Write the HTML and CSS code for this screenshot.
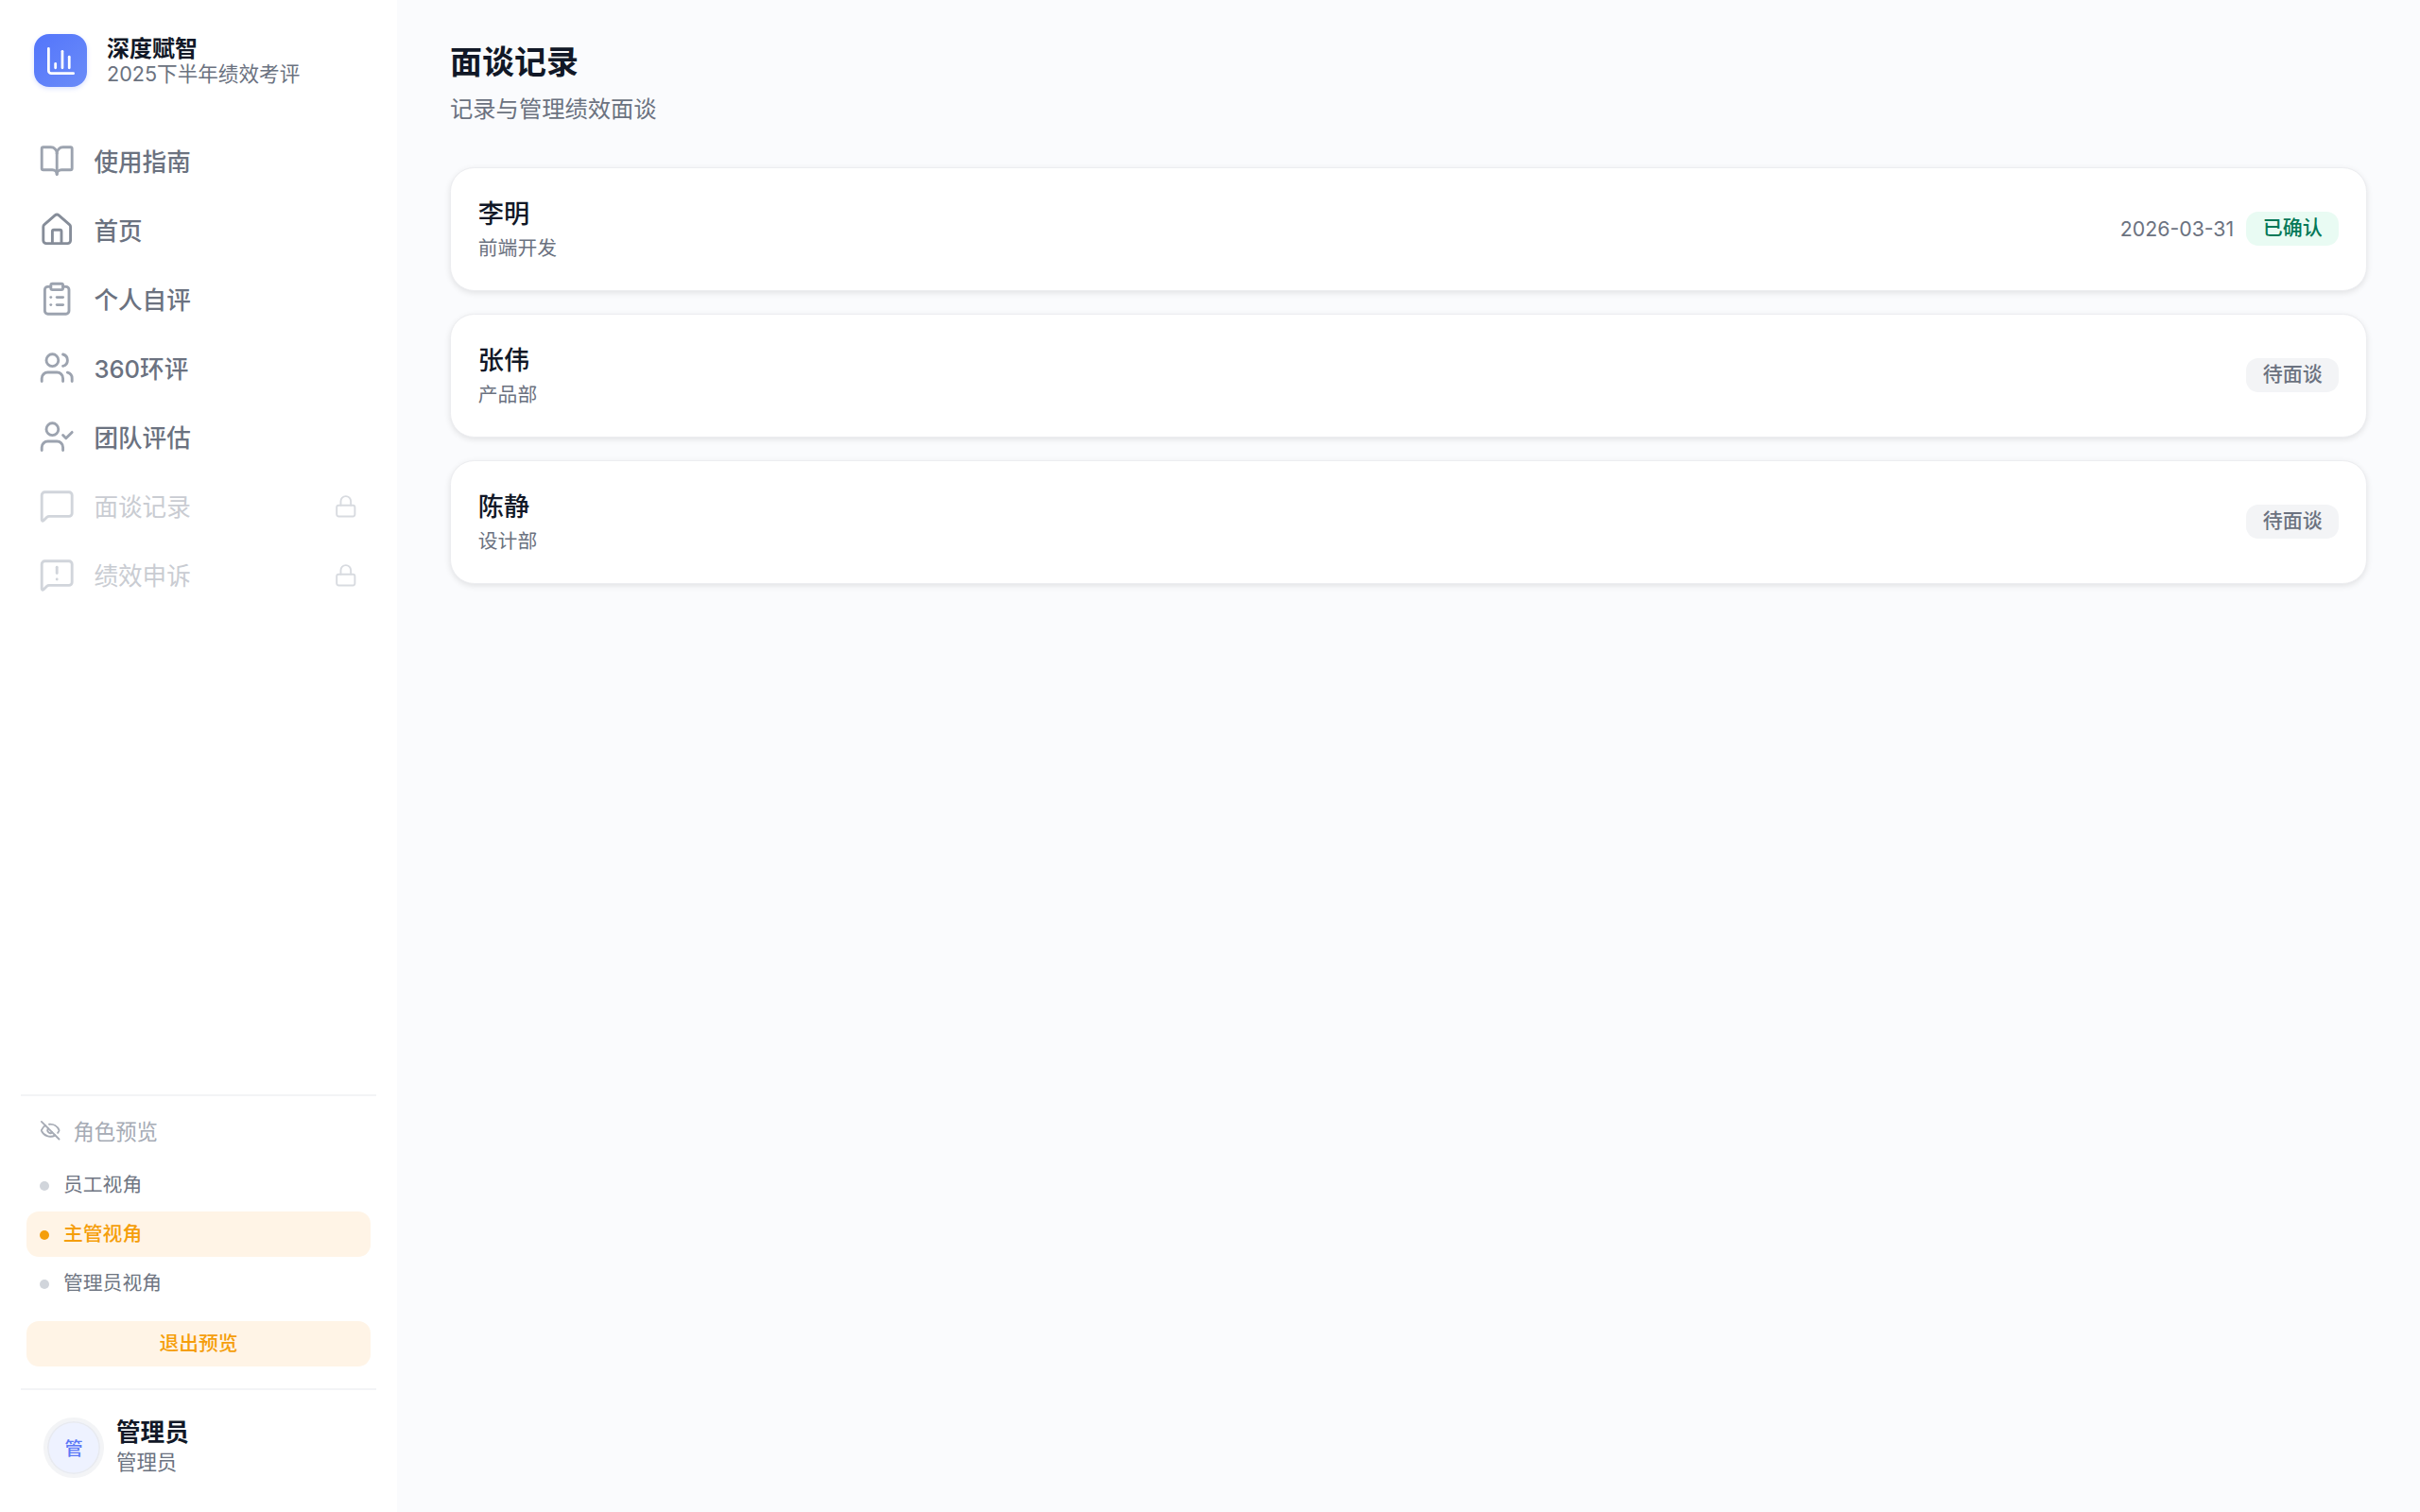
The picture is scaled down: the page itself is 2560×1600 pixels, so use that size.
FILE: index.html
```html
<!DOCTYPE html>
<html lang="zh-CN">
<head>
<meta charset="utf-8">
<title>面谈记录</title>
<link rel="stylesheet" href="styles.css">
</head>
<body>
<div class="app">
  <aside class="sidebar">
    <div class="brand">
      <div class="logo">
        <svg viewBox="0 0 24 24" class="logo-icon"><path d="M3 3v16a2 2 0 0 0 2 2h16"/><path d="M18 17V9"/><path d="M13 17V5"/><path d="M8 17v-3"/></svg>
      </div>
      <div class="brand-text">
        <div class="brand-name">深度赋智</div>
        <div class="brand-sub">2025下半年绩效考评</div>
      </div>
    </div>
    <nav class="nav">
      <a class="nav-item"><svg class="nav-icon" viewBox="0 0 24 24"><path d="M12 7v14"/><path d="M3 18a1 1 0 0 1-1-1V4a1 1 0 0 1 1-1h5a4 4 0 0 1 4 4 4 4 0 0 1 4-4h5a1 1 0 0 1 1 1v13a1 1 0 0 1-1 1h-6a3 3 0 0 0-3 3 3 3 0 0 0-3-3z"/></svg><span class="nav-label">使用指南</span></a>
      <a class="nav-item"><svg class="nav-icon" viewBox="0 0 24 24"><path d="M15 21v-8a1 1 0 0 0-1-1h-4a1 1 0 0 0-1 1v8"/><path d="M3 10a2 2 0 0 1 .709-1.528l7-5.999a2 2 0 0 1 2.582 0l7 5.999A2 2 0 0 1 21 10v9a2 2 0 0 1-2 2H5a2 2 0 0 1-2-2z"/></svg><span class="nav-label">首页</span></a>
      <a class="nav-item"><svg class="nav-icon" viewBox="0 0 24 24"><rect width="8" height="4" x="8" y="2" rx="1" ry="1"/><path d="M16 4h2a2 2 0 0 1 2 2v14a2 2 0 0 1-2 2H6a2 2 0 0 1-2-2V6a2 2 0 0 1 2-2h2"/><path d="M12 11h4"/><path d="M12 16h4"/><path d="M8 11h.01"/><path d="M8 16h.01"/></svg><span class="nav-label">个人自评</span></a>
      <a class="nav-item"><svg class="nav-icon" viewBox="0 0 24 24"><path d="M16 21v-2a4 4 0 0 0-4-4H6a4 4 0 0 0-4 4v2"/><path d="M16 3.128a4 4 0 0 1 0 7.744"/><path d="M22 21v-2a4 4 0 0 0-3-3.87"/><circle cx="9" cy="7" r="4"/></svg><span class="nav-label">360环评</span></a>
      <a class="nav-item"><svg class="nav-icon" viewBox="0 0 24 24"><path d="M16 21v-2a4 4 0 0 0-4-4H6a4 4 0 0 0-4 4v2"/><circle cx="9" cy="7" r="4"/><polyline points="16 11 18 13 22 9"/></svg><span class="nav-label">团队评估</span></a>
      <a class="nav-item locked"><svg class="nav-icon" viewBox="0 0 24 24"><path d="M22 17a2 2 0 0 1-2 2H6.828a2 2 0 0 0-1.414.586l-2.202 2.202A.71.71 0 0 1 2 21.286V5a2 2 0 0 1 2-2h16a2 2 0 0 1 2 2z"/></svg><span class="nav-label">面谈记录</span><svg class="lock-icon" viewBox="0 0 24 24"><rect width="18" height="11" x="3" y="11" rx="2" ry="2"/><path d="M7 11V7a5 5 0 0 1 10 0v4"/></svg></a>
      <a class="nav-item locked"><svg class="nav-icon" viewBox="0 0 24 24"><path d="M22 17a2 2 0 0 1-2 2H6.828a2 2 0 0 0-1.414.586l-2.202 2.202A.71.71 0 0 1 2 21.286V5a2 2 0 0 1 2-2h16a2 2 0 0 1 2 2z"/><path d="M12 7v4"/><path d="M12 15h.01"/></svg><span class="nav-label">绩效申诉</span><svg class="lock-icon" viewBox="0 0 24 24"><rect width="18" height="11" x="3" y="11" rx="2" ry="2"/><path d="M7 11V7a5 5 0 0 1 10 0v4"/></svg></a>
    </nav>
    <section class="preview">
      <div class="preview-label"><svg class="eye-icon" viewBox="0 0 24 24"><path d="M10.733 5.076a10.744 10.744 0 0 1 11.205 6.575 1 1 0 0 1 0 .696 10.747 10.747 0 0 1-1.444 2.49"/><path d="M14.084 14.158a3 3 0 0 1-4.242-4.242"/><path d="M17.479 17.499a10.75 10.75 0 0 1-15.417-5.151 1 1 0 0 1 0-.696 10.75 10.75 0 0 1 4.446-5.143"/><path d="m2 2 20 20"/></svg><span>角色预览</span></div>
      <div class="role"><i class="dot"></i><span class="role-label">员工视角</span></div>
      <div class="role active"><i class="dot"></i><span class="role-label">主管视角</span></div>
      <div class="role"><i class="dot"></i><span class="role-label">管理员视角</span></div>
      <button class="exit">退出预览</button>
    </section>
    <footer class="user">
      <div class="avatar">管</div>
      <div class="user-text">
        <div class="user-name">管理员</div>
        <div class="user-role">管理员</div>
      </div>
    </footer>
  </aside>
  <main class="main">
    <h1 class="title">面谈记录</h1>
    <p class="subtitle">记录与管理绩效面谈</p>
    <div class="list">
      <article class="card">
        <div class="person"><div class="name">李明</div><div class="dept">前端开发</div></div>
        <div class="meta"><span class="date">2026-03-31</span><span class="badge ok">已确认</span></div>
      </article>
      <article class="card">
        <div class="person"><div class="name">张伟</div><div class="dept">产品部</div></div>
        <div class="meta"><span class="badge wait">待面谈</span></div>
      </article>
      <article class="card">
        <div class="person"><div class="name">陈静</div><div class="dept">设计部</div></div>
        <div class="meta"><span class="badge wait">待面谈</span></div>
      </article>
    </div>
  </main>
</div>
</body>
</html>
```

FILE: styles.css
```css
* { box-sizing: border-box; }
html, body { margin: 0; height: 100%; }
body {
  font-family: Inter, "Noto Sans CJK SC", sans-serif;
  background: #fafbfd;
  color: #111827;
}
.app { display: flex; height: 1600px; overflow: hidden; }
.sidebar {
  width: 420px;
  flex: none;
  height: 100%;
  background: #fff;
  display: flex;
  flex-direction: column;
  padding: 0 22px;
}
.brand { display: flex; align-items: center; gap: 21px; padding: 36px 14px 0; height: 92px; }
.logo {
  width: 56px; height: 56px; border-radius: 16px; flex: none;
  background: linear-gradient(135deg, #5375fb, #6b8cf8);
  box-shadow: 0 2px 5px rgba(83, 117, 251, .2);
  display: flex; align-items: center; justify-content: center;
}
.logo-icon { width: 35px; height: 35px; fill: none; stroke: #fff; stroke-width: 1.9; stroke-linecap: round; stroke-linejoin: round; }
.brand-name { font-size: 24px; font-weight: 600; line-height: 26px; padding-top: 1px; color: #111827; }
.brand-sub { font-size: 21.6px; line-height: 26px; color: #6b7280; }
.nav { display: flex; flex-direction: column; margin-top: 42px; }
.nav-item {
  height: 73px; display: flex; align-items: center; gap: 20px; padding: 0 19px;
  font-size: 25.6px; font-weight: 500; color: #6b7280;
}
.nav-label { padding-bottom: 2.5px; }
.nav-icon { width: 38.4px; height: 38.4px; flex: none; fill: none; stroke: #9ca3af; stroke-width: 1.8; stroke-linecap: round; stroke-linejoin: round; }
.nav-item:nth-child(2) .nav-icon { stroke: #868d99; }
.nav-item.locked { color: #c9ccd2; font-weight: 400; }
.nav-item.locked .nav-icon { stroke: #d1d5db; }
.lock-icon { width: 25.6px; height: 25.6px; margin-left: auto; fill: none; stroke: #d8dbe0; stroke-width: 1.8; stroke-linecap: round; stroke-linejoin: round; }
.preview {
  margin-top: auto;
  border-top: 2px solid #f3f4f6;
  padding: 17px 6px 23px;
}
.preview-label { display: flex; align-items: center; gap: 13px; height: 38px; padding-left: 14px; font-size: 22.4px; color: #a6abb5; margin-bottom: 15px; }
.eye-icon { width: 22.4px; height: 22.4px; fill: none; stroke: #a6abb5; stroke-width: 2; stroke-linecap: round; stroke-linejoin: round; }
.role {
  height: 48px; border-radius: 13px; display: flex; align-items: center; gap: 15px;
  padding-left: 14px; margin-bottom: 4px; font-size: 20.8px; color: #6f7683;
}
.role-label { padding-bottom: 4px; }
.dot { width: 10px; height: 10px; border-radius: 50%; background: #d1d5db; flex: none; margin-top: 2px; }
.role.active { background: #fff4e6; color: #f59e0b; font-weight: 500; }
.role.active .dot { background: #f59e0b; }
.exit {
  display: block; width: 100%; height: 48px; margin-top: 16px; border: 0; border-radius: 13px;
  background: #fff4e6; color: #f59e0b; font: 500 20.8px Inter, "Noto Sans CJK SC", sans-serif;
  padding: 0 0 4px;
}
.user { border-top: 2px solid #f3f4f6; height: 131px; display: flex; align-items: center; gap: 13px; padding: 0 24px 7px; }
.avatar {
  width: 64px; height: 64px; border-radius: 50%; flex: none; background: #eef2ff;
  border: 4px solid #f3f4f6; box-shadow: inset 0 0 0 1.6px #e8eaef;
  color: #5b78f6; font-size: 19.2px; font-weight: 500;
  display: flex; align-items: center; justify-content: center;
}
.user-text { padding-bottom: 3px; }
.user-name { font-size: 25.6px; font-weight: 600; line-height: 32px; color: #111827; }
.user-role { font-size: 21.4px; line-height: 30px; color: #6b7280; }
.main { flex: 1; padding: 40.5px 56px; min-width: 0; }
.title { margin: 0; font-size: 34px; font-weight: 600; line-height: 50px; color: #111827; }
.subtitle { margin: 6.5px 0 0; font-size: 24.3px; line-height: 36px; color: #6b7280; }
.list { display: flex; flex-direction: column; gap: 24px; margin-top: 43.5px; }
.card {
  height: 131px; background: #fff; border: 1.6px solid #ecedf0; border-radius: 25.6px;
  box-shadow: 0 2px 6px rgba(0, 0, 0, .1);
  display: flex; align-items: center; justify-content: space-between; padding: 0 28.8px;
}
.person { padding-top: 3px; }
.name { font-size: 27.2px; font-weight: 500; line-height: 36px; color: #111827; }
.dept { font-size: 20.8px; line-height: 30px; margin-top: 3px; color: #6b7280; }
.meta { display: flex; align-items: center; gap: 13px; }
.date { font-size: 21.3px; padding-bottom: 1px; color: #6b7280; }
.badge { width: 98px; height: 36px; border-radius: 13px; font-size: 21px; display: flex; align-items: center; justify-content: center; font-weight: 500; padding-bottom: 6px; }
.badge.ok { background: #e9fbf3; color: #047857; }
.badge.wait { background: #f3f4f6; color: #6b7280; }
```
